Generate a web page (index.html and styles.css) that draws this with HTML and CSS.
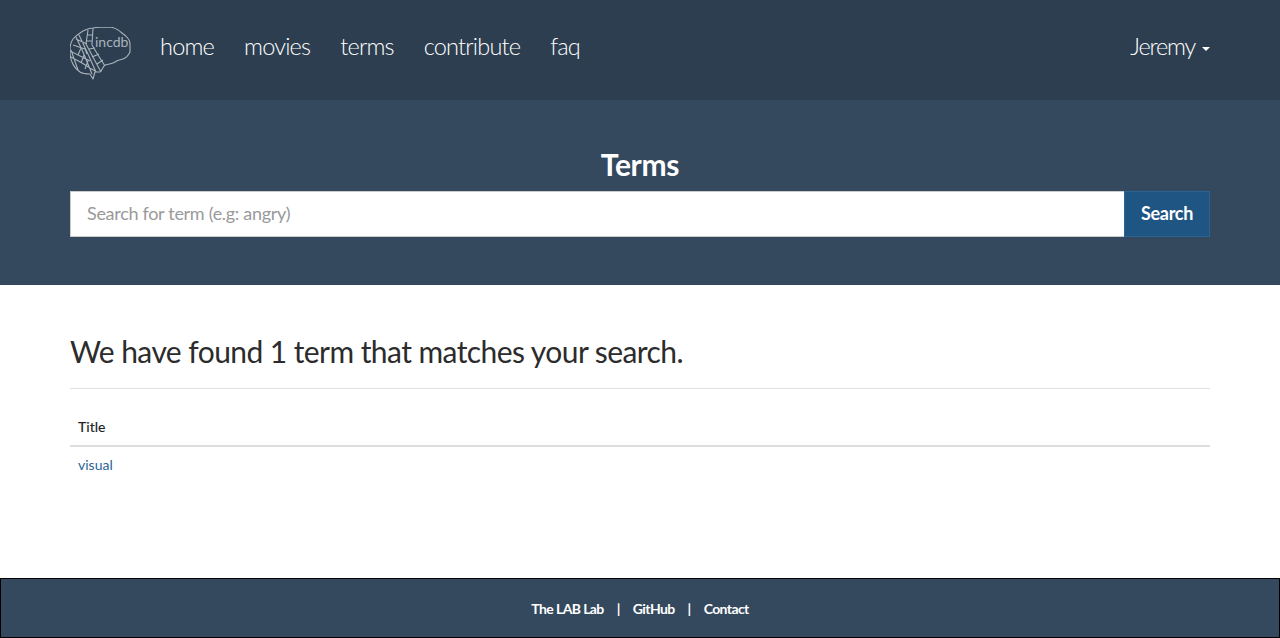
FILE: index.html
```html
<!DOCTYPE html>
<html lang="en">
<head>
<meta charset="utf-8">
<title>Terms</title>
<link rel="stylesheet" href="styles.css">
</head>
<body>
<div class="page">
  <nav class="navbar">
    <a class="brand" href="#" aria-label="incdb">
      <svg width="62" height="54" viewBox="0 0 62 54" fill="none" stroke="#a9b3bc" stroke-width="1.1" stroke-linejoin="round">
        <path d="M13 4C17 2 20 1 23 1C29 0 35 0 40 0C46 1 50 4 52 6C56 9 60 12 60 17L60 25C58 29 56 31 53 32C50 33 47 33 45 35C42 37 38 37 35 38C33 39 32 44 30 45L25 45L23 52L20 47C16 47 13 47 10 45C6 42 3 38 2 35C0 31 0 27 0 23C0 19 1 15 3 12C6 8 10 6 13 4Z"/>
        <path d="M18 3L16 17L24 32L31 45M23 1L22 18L28 28L35 39M6 10L13 25L22 47M1 23L8 43M9 8L18 27L26 45M6 12L17 17M3 18L15 22L17 27M0 24L20 34M1 30L12 36L25 44M17 8L23 8M16 14L22 14M19 22L25 21M22 30L29 27M27 37L33 33M11 21L8 28M14 28L11 36M18 34L15 42"/>
        <text class="logo-text" x="25" y="20">incdb</text>
      </svg>
    </a>
    <ul class="nav-links">
      <li><a href="#">home</a></li>
      <li><a href="#">movies</a></li>
      <li><a href="#">terms</a></li>
      <li><a href="#">contribute</a></li>
      <li><a href="#">faq</a></li>
    </ul>
    <a class="user" href="#">Jeremy<span class="caret"></span></a>
  </nav>
  <section class="hero">
    <h1>Terms</h1>
    <form class="search">
      <input type="text" placeholder="Search for term (e.g: angry)">
      <button type="button">Search</button>
    </form>
  </section>
  <main class="content">
    <h2>We have found 1 term that matches your search.</h2>
    <hr>
    <table>
      <thead><tr><th>Title</th></tr></thead>
      <tbody><tr><td><a href="#">visual</a></td></tr></tbody>
    </table>
  </main>
  <footer class="footer">
    <a href="#">The LAB Lab</a><span class="sep">|</span><a href="#">GitHub</a><span class="sep">|</span><a href="#">Contact</a>
  </footer>
</div>
</body>
</html>
```
FILE: styles.css
```css
* { box-sizing: border-box; }
html, body { margin: 0; padding: 0; }
body { font-family: "Lato", "Open Sans", sans-serif; color: #2c2c2c; background: #fff; }
a { text-decoration: none; }
.page { min-height: 100vh; display: flex; flex-direction: column; }
.navbar { height: 100px; background: #2d3e50; display: flex; align-items: center; padding: 0 70px 8px; }
.brand { display: flex; width: 90px; flex: none; padding-top: 16px; }
.logo-text { font-size: 14px; fill: #a9b3bc; stroke: none; font-family: "Lato", sans-serif; font-weight: 400; }
.nav-links { list-style: none; display: flex; gap: 30px; margin: 0; padding: 0; flex: 1; }
.nav-links a, .user { color: #fff; font-size: 23.5px; font-weight: 300; letter-spacing: -0.8px; line-height: 30px; display: block; }
.user { letter-spacing: -1.2px; }
.caret { display: inline-block; margin-left: 7px; vertical-align: middle; border-top: 4px solid #fff; border-left: 4px solid transparent; border-right: 4px solid transparent; }
.hero { height: 185px; background: #34495e; padding: 47px 70px 0; }
.hero h1 { margin: 0 0 9px; text-align: center; color: #fff; font-size: 30px; font-weight: 700; letter-spacing: -0.3px; line-height: 35px; }
.search { display: flex; height: 46px; }
.search input { flex: 1; height: 46px; border: 1px solid #ccc; border-right: 0; padding: 0 16px 2px; font: 18px "Lato", sans-serif; letter-spacing: -0.3px; background: #fff; outline: none; }
.search input::placeholder { color: #999; opacity: 1; }
.search button { width: 86px; height: 46px; background: #1f5583; border: 1px solid #2a6496; color: #fff; font: 700 18px "Lato", sans-serif; letter-spacing: -0.3px; padding: 0 0 2px; }
.content { flex: 1; padding: 46px 70px 0; }
.content h2 { margin: 0; font-size: 30px; font-weight: 400; letter-spacing: -0.57px; line-height: 40px; color: #2c2c2c; }
.content hr { margin: 17px 0 20px; border: 0; border-top: 1px solid #e0e0e0; }
table { width: 100%; border-collapse: collapse; font-size: 14px; }
th { text-align: left; padding: 8px; line-height: 20px; font-weight: 500; border-bottom: 2px solid #ddd; color: #222; }
td { padding: 8px; line-height: 20px; }
td a { color: #2a6496; }
.footer { height: 60px; background: #34495e; border: 1px solid #000; display: flex; align-items: center; justify-content: center; color: #fff; font-size: 14px; font-weight: 700; letter-spacing: -0.6px; }
.footer a { color: #fff; }
.sep { margin: 0 13px; }
```
